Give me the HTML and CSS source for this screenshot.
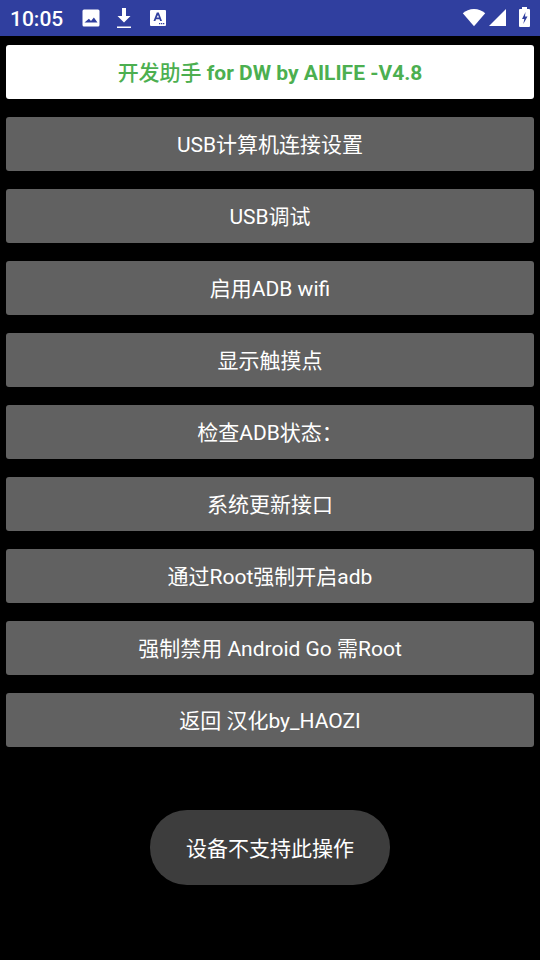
FILE: index.html
```html
<!DOCTYPE html>
<html lang="zh-CN">
<head>
  <meta charset="UTF-8">
  <meta name="viewport" content="width=device-width, initial-scale=1.0">
  <title>开发助手 for DW</title>
  <link rel="stylesheet" href="styles.css">
</head>
<body>

  <div class="status-bar">
    <div class="status-left">
      <span class="clock">10:05</span>
      <svg class="icon icon-image" width="20" height="20" viewBox="0 0 20 20">
        <path fill="#fff" fill-rule="evenodd" d="M3 1.500h14a1.500 1.500 0 0 1 1.500 1.500v14a1.500 1.500 0 0 1-1.500 1.500H3A1.500 1.500 0 0 1 1.500 17V3A1.500 1.500 0 0 1 3 1.500zM3.500 14.500h13l-3.600-5-2.900 3.600-2.100-2.400z"/>
      </svg>
      <svg class="icon icon-download" width="20" height="24" viewBox="0 0 20 24">
        <path fill="#fff" d="M8 2h4v8h4.500L10 16.500 3.500 10H8zM3 20.500h14V22H3z"/>
      </svg>
      <svg class="icon" width="20" height="20" viewBox="0 0 20 20">
        <path fill="#fff" fill-rule="evenodd" d="M3 2h14a1 1 0 0 1 1 1v14a1 1 0 0 1-1 1H3a1 1 0 0 1-1-1V3a1 1 0 0 1 1-1zM8.800 4.500 5.500 13h1.900l.6-1.800h3.500l.6 1.800h1.900L10.800 4.500zM8.600 9.600 10 6.900l1 2.700zM11 15h1.300v1.300H11zM13 15h1.300v1.300H13zM15 15h1.300v1.300H15z"/>
      </svg>
    </div>
    <div class="status-right">
      <svg class="icon icon-wifi" width="24" height="20" viewBox="0 0 24 20">
        <path fill="#fff" d="M.8 5.300C3.700 2.600 7.600 1 12 1s8.300 1.600 11.200 4.300L12 18.200z"/>
      </svg>
      <svg class="icon icon-signal" width="19" height="20" viewBox="0 0 19 20">
        <path fill="#fff" d="M18 1v17H1z"/>
      </svg>
      <svg class="icon" width="13" height="22" viewBox="0 0 13 22">
        <path fill="#fff" fill-rule="evenodd" d="M4 0h5v2h2a1 1 0 0 1 1 1v16a1 1 0 0 1-1 1H2a1 1 0 0 1-1-1V3a1 1 0 0 1 1-1h2zM7.500 5 4 12h2.300l-1 5L9.500 9.500H7z"/>
      </svg>
    </div>
  </div>

  <div class="menu">
    <button class="btn btn-title"><span class="cjk-medium">开发助手</span> for DW by AILIFE -V4.8</button>
    <button class="btn">USB计算机连接设置</button>
    <button class="btn">USB调试</button>
    <button class="btn">启用ADB wifi</button>
    <button class="btn">显示触摸点</button>
    <button class="btn">检查ADB状态：</button>
    <button class="btn">系统更新接口</button>
    <button class="btn">通过Root强制开启adb</button>
    <button class="btn">强制禁用 Android Go 需Root</button>
    <button class="btn">返回 汉化by_HAOZI</button>
  </div>

  <div class="toast">设备不支持此操作</div>

</body>
</html>
```

FILE: styles.css
```css
* {
  margin: 0;
  padding: 0;
  box-sizing: border-box;
}

body {
  font-family: Roboto, "Noto Sans CJK SC", sans-serif;
  background-color: #000;
  height: 100vh;
  overflow: hidden;
  position: relative;
}

.status-bar {
  height: 36px;
  background-color: #303f9f;
  color: #fff;
  display: flex;
  align-items: center;
  justify-content: space-between;
  padding: 0 9px 0 10px;
}

.status-left {
  display: flex;
  align-items: center;
}

.status-right {
  display: flex;
  align-items: center;
}

.clock {
  font-size: 21px;
  font-weight: 500;
  margin-right: 18px;
  padding-top: 1px;
}

.icon {
  display: block;
}

.icon-image {
  margin-right: 13px;
}

.icon-download {
  margin-right: 14px;
}

.icon-wifi {
  margin-right: 2px;
}

.icon-signal {
  margin-right: 11px;
}

.menu {
  display: flex;
  flex-direction: column;
  gap: 18px;
  padding: 9px 6px 0;
}

.btn {
  height: 54px;
  padding-bottom: 2px;
  background-color: #616161;
  color: #fff;
  border: none;
  border-radius: 3px;
  font-family: inherit;
  font-size: 21px;
}

.btn-title {
  background-color: #fff;
  color: #4caf50;
  font-weight: 700;
}

.cjk-medium {
  font-weight: 500;
}

.toast {
  position: absolute;
  top: 810px;
  left: 150px;
  width: 240px;
  height: 75px;
  padding-bottom: 2px;
  border-radius: 37px;
  background-color: #3d3d3d;
  color: #fff;
  font-size: 21px;
  display: flex;
  align-items: center;
  justify-content: center;
}
```
